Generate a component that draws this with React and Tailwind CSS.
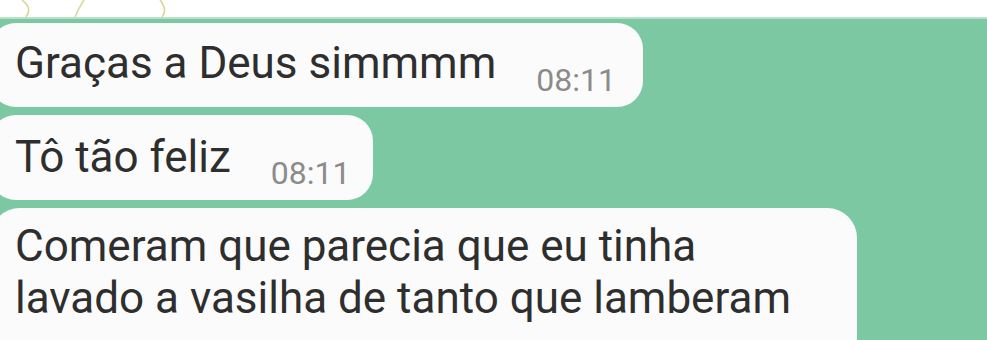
export default function App() {
  const font = { fontFamily: 'Roboto, "Liberation Sans", sans-serif' };

  return (
    <div className="w-[987px] h-[340px] overflow-hidden bg-white flex flex-col" style={font}>
      {/* top white strip with doodle strokes */}
      <div className="h-[17px] shrink-0 bg-white relative">
        <svg width="987" height="17" className="absolute inset-0">
          <path d="M22 0 C30 6, 30 12, 26 17" fill="none" stroke="#d8d79a" strokeWidth="1.6" />
          <path d="M84 0 C80 6, 77 12, 75 17" fill="none" stroke="#d8d79a" strokeWidth="1.6" />
          <path d="M160 0 C165 6, 166 12, 162 17" fill="none" stroke="#d8d79a" strokeWidth="1.6" />
        </svg>
      </div>

      <div className="flex-1 bg-[#7bc8a2] border-t-2 border-[#b9e0cb] flex flex-col gap-[8px] pt-[4px]">
        {/* Bubble 1 */}
        <div className="-ml-[10px] w-[653px] h-[84px] bg-[#fbfbfb] rounded-[26px] pl-[25px] pt-[14px] flex items-baseline">
          <span className="text-[44px] leading-[52px] text-[#2e2e2e]">Graças a Deus simmmm</span>
          <span className="ml-[40px] text-[32px] leading-[36px] text-[#8b8b8b] translate-y-[13px]">08:11</span>
        </div>

        {/* Bubble 2 */}
        <div className="-ml-[10px] w-[383px] h-[85px] bg-[#fbfbfb] rounded-[26px] pl-[25px] pt-[16px] flex items-baseline">
          <span className="text-[44px] leading-[52px] text-[#2e2e2e]">Tô tão feliz</span>
          <span className="ml-[40px] text-[32px] leading-[36px] text-[#8b8b8b] translate-y-[12px]">08:11</span>
        </div>

        {/* Bubble 3 */}
        <div className="-ml-[10px] w-[867px] h-[160px] shrink-0 bg-[#fbfbfb] rounded-t-[30px] pl-[25px] pt-[12px]">
          <p className="text-[44px] leading-[52px] text-[#2e2e2e] whitespace-nowrap">
            Comeram que parecia que eu tinha
            <br />
            lavado a vasilha de tanto que lamberam
          </p>
        </div>
      </div>
    </div>
  );
}
